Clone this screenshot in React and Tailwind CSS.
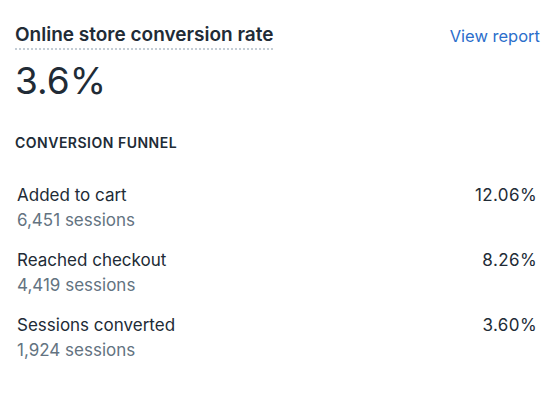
import React from "react";

const rows = [
  { label: "Added to cart", sessions: "6,451 sessions", pct: "12.06%" },
  { label: "Reached checkout", sessions: "4,419 sessions", pct: "8.26%" },
  { label: "Sessions converted", sessions: "1,924 sessions", pct: "3.60%" },
];

export default function App() {
  return (
    <div className="w-[560px] h-[396px] bg-white text-[#212b36] font-['Inter',sans-serif] px-[15px] pt-[22px]">
      <div className="flex items-start justify-between">
        <h2 className="text-[19px] leading-[26px] font-semibold border-b-2 border-dotted border-[#c4cdd5]">
          Online store conversion rate
        </h2>
        <a className="text-[16.5px] leading-[28px] text-[#2c6ecb] mr-[5px]">View report</a>
      </div>
      <div className="text-[37px] leading-[46px] mt-[8px] font-normal">3.6%</div>
      <div className="mt-[29px] text-[14px] leading-[20px] font-semibold tracking-[0.5px]">CONVERSION FUNNEL</div>
      <div className="mt-[30px] pl-[2px] pr-[8px] flex flex-col gap-[15px]">
        {rows.map((r) => (
          <div key={r.label} className="flex justify-between items-start">
            <div className="text-[17px] leading-[25px]">
              <div>{r.label}</div>
              <div className="text-[#637381]">{r.sessions}</div>
            </div>
            <div className="text-[17px] leading-[25px] tracking-[0.4px]">{r.pct}</div>
          </div>
        ))}
      </div>
    </div>
  );
}
